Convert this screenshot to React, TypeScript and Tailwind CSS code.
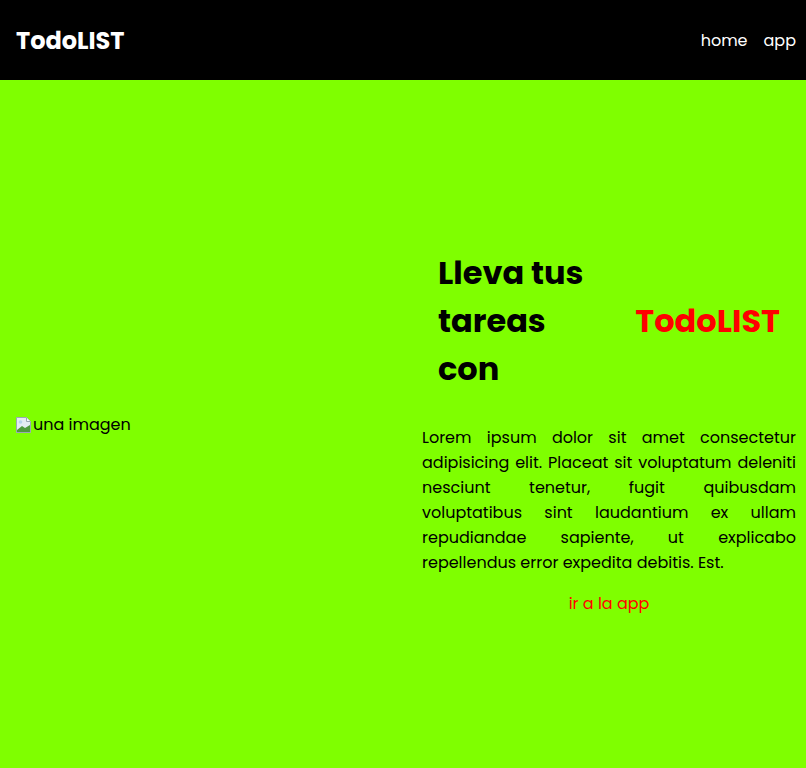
import React from "react";

function BrokenImg() {
  return (
    <svg width="16" height="16" viewBox="0 0 16 16" className="inline-block shrink-0">
      <path d="M0.5 0.5h10l4 4v11h-14z" fill="#e4ecf2" stroke="#9aa8b4" />
      <path d="M10.5 0.5v4h4" fill="#f4f7fa" stroke="#9aa8b4" />
      <circle cx="4.5" cy="5" r="1.8" fill="#b8d4ec" />
      <path d="M1 15V13l5-4 3 2 5-3v7z" fill="#4f9a3c" />
    </svg>
  );
}

export default function App() {
  return (
    <div className="min-h-[768px] bg-[#7fff00] font-['Poppins','Inter','Noto_Sans',sans-serif] text-black flex flex-col">
      <header className="h-20 bg-black flex items-center justify-between pl-4 pr-[10px]">
        <h1 className="text-white text-[24px] font-bold leading-[38px] pt-[2px]">TodoLIST</h1>
        <nav className="flex gap-4 text-white text-[16px] pt-[2px]">
          <a>home</a>
          <a>app</a>
        </nav>
      </header>
      <main className="flex-1 flex items-center">
        <div className="w-[422px] pl-4 flex items-center text-[16px] pt-[2px]">
          <BrokenImg />
          <span className="ml-[1px]">una imagen</span>
        </div>
        <div className="w-[374px] pt-4 flex flex-col">
          <h2 className="flex items-center justify-between px-4 text-[32px] font-bold leading-[48px]">
            <span className="w-[160px]">Lleva tus tareas con</span>
            <span className="text-[#ff0000]">TodoLIST</span>
          </h2>
          <p className="mt-8 text-[16px] leading-[25px] text-justify">
            Lorem ipsum dolor sit amet consectetur adipisicing elit. Placeat sit voluptatum deleniti nesciunt tenetur, fugit quibusdam voluptatibus sint laudantium ex ullam repudiandae sapiente, ut explicabo repellendus error expedita debitis. Est.
          </p>
          <a className="mt-4 text-center text-[#ff0000] text-[16px] leading-[25px]">ir a la app</a>
        </div>
      </main>
    </div>
  );
}
